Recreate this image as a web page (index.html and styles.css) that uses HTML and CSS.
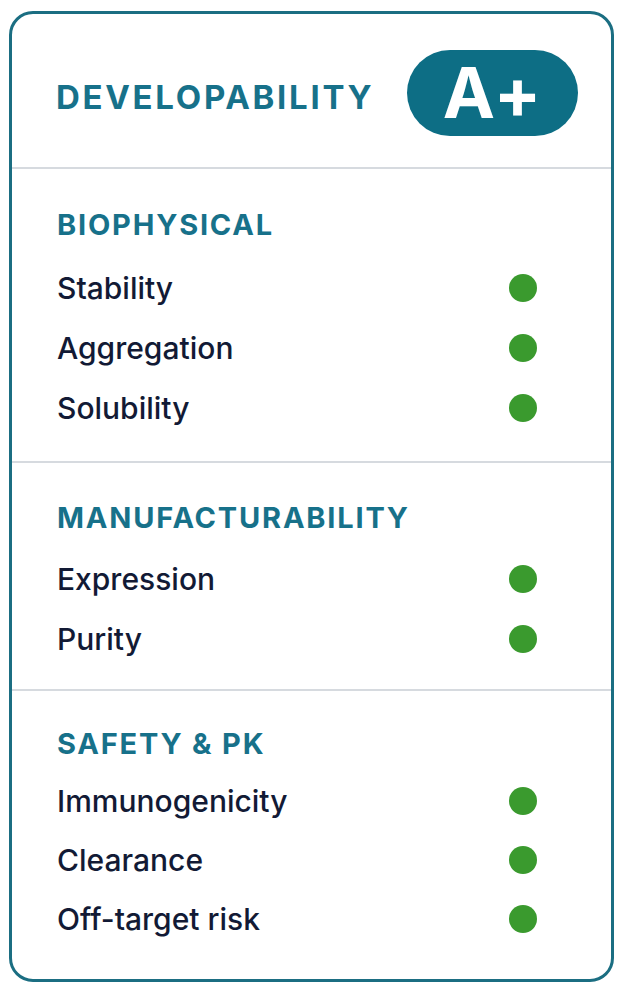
FILE: index.html
```html
<!DOCTYPE html>
<html lang="en">
<head>
<meta charset="utf-8">
<title>Developability</title>
<link rel="stylesheet" href="styles.css">
</head>
<body>
<div class="card">
  <header class="card-head">
    <h1 class="title">DEVELOPABILITY</h1>
    <div class="grade">A+</div>
  </header>
  <section class="group group-bio">
    <h2 class="group-title">BIOPHYSICAL</h2>
    <ul class="items">
      <li class="item"><span>Stability</span><i class="dot"></i></li>
      <li class="item"><span>Aggregation</span><i class="dot"></i></li>
      <li class="item"><span>Solubility</span><i class="dot"></i></li>
    </ul>
  </section>
  <section class="group group-man">
    <h2 class="group-title">MANUFACTURABILITY</h2>
    <ul class="items">
      <li class="item"><span>Expression</span><i class="dot"></i></li>
      <li class="item"><span>Purity</span><i class="dot"></i></li>
    </ul>
  </section>
  <section class="group group-safe">
    <h2 class="group-title">SAFETY &amp; PK</h2>
    <ul class="items">
      <li class="item"><span>Immunogenicity</span><i class="dot"></i></li>
      <li class="item"><span>Clearance</span><i class="dot"></i></li>
      <li class="item"><span>Off-target risk</span><i class="dot"></i></li>
    </ul>
  </section>
</div>
</body>
</html>
```
FILE: styles.css
```css
* { box-sizing: border-box; }
html, body { margin: 0; padding: 0; background: #ffffff; }
body {
  padding: 11px 12px 12px 9px;
  font-family: "Inter", "Liberation Sans", sans-serif;
}
.card {
  width: 605px;
  height: 971px;
  border: 3px solid #1b6e82;
  border-radius: 24px;
  background: #fff;
  display: flex;
  flex-direction: column;
  overflow: hidden;
}
.card-head {
  display: flex;
  align-items: center;
  justify-content: space-between;
  padding: 36px 33px 31px 44px;
  border-bottom: 2px solid #d6dadf;
}
.title {
  margin: 0;
  font-size: 33px;
  font-weight: 700;
  letter-spacing: 2.7px;
  color: #17718a;
  line-height: 40px;
  padding-top: 8px;
}
.grade {
  width: 171px;
  height: 86px;
  border-radius: 43px;
  background: #0d6e85;
  color: #fff;
  font-size: 70px;
  font-weight: 700;
  line-height: 86px;
  text-align: center;
  letter-spacing: 1px;
}
.group {
  padding: 37px 74px 20px 45px;
  border-bottom: 2px solid #d6dadf;
}
.group-bio { padding-top: 38px; padding-bottom: 23px; }
.group-safe { border-bottom: 0; padding-top: 35px; }
.group-title {
  margin: 0 0 13px;
  font-size: 29px;
  font-weight: 700;
  letter-spacing: 1.8px;
  line-height: 36px;
  color: #17718a;
}
.group-safe .group-title { margin-bottom: 9px; }
.group-bio .group-title { margin-bottom: 15px; }
.items { list-style: none; margin: 0; padding: 0; }
.item {
  display: flex;
  align-items: center;
  justify-content: space-between;
  height: 60px;
  font-size: 30px;
  font-weight: 500;
  color: #121a35;
}
.group-safe .item { height: 59px; }
.dot {
  width: 28px;
  height: 28px;
  border-radius: 50%;
  background: #3a9a2e;
}
```
